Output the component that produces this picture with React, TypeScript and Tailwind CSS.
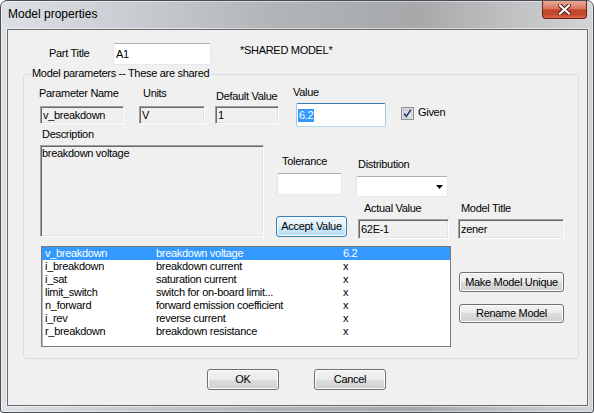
import React from 'react';

const PARAMS: [string, string, string][] = [
  ['v_breakdown', 'breakdown voltage', '6.2'],
  ['i_breakdown', 'breakdown current', 'x'],
  ['i_sat', 'saturation current', 'x'],
  ['limit_switch', 'switch for on-board limit...', 'x'],
  ['n_forward', 'forward emission coefficient', 'x'],
  ['i_rev', 'reverse current', 'x'],
  ['r_breakdown', 'breakdown resistance', 'x'],
];

// classic sunken read-only edit
const sunken =
  'bg-[#f0f0f0] border border-t-[#a0a0a0] border-l-[#a0a0a0] border-r-white border-b-white shadow-[inset_1px_1px_0_#696969,inset_-1px_-1px_0_#e3e3e3]';
// themed editable box
const editBox = 'bg-white border border-[#e3e9ef] border-t-[#abadb3] border-l-[#e2e3ea] rounded-[2px]';
const button =
  'flex items-center justify-center border border-[#707070] rounded-[3px] bg-[linear-gradient(#f2f2f2_0%,#ebebeb_50%,#dddddd_50%,#cfcfcf_100%)] shadow-[inset_0_0_0_1px_#fcfcfc]';

function CheckBox() {
  return (
    <svg width="13" height="13" viewBox="0 0 13 13">
      <defs>
        <linearGradient id="cb" x1="0" y1="0" x2="1" y2="1">
          <stop offset="0" stopColor="#cfd1d3" />
          <stop offset="1" stopColor="#eef0f2" />
        </linearGradient>
      </defs>
      <rect x="0.5" y="0.5" width="12" height="12" fill="#f4f4f4" stroke="#8f8f8f" />
      <rect x="2" y="2" width="9" height="9" fill="url(#cb)" stroke="#b4b8bd" strokeWidth="0.8" />
      <path d="M3.2 6.6 L5.4 9.4 L9.8 2.8" fill="none" stroke="#2a3f7a" strokeWidth="1.7" />
    </svg>
  );
}

export default function App() {
  return (
    <div className="w-[594px] h-[413px] font-['Liberation_Sans',Arial,sans-serif] text-black">
      <div className="w-[594px] h-[413px] flex flex-col rounded-t-[7px] rounded-b-[3px] border border-[#4a4d52] shadow-[inset_0_0_0_1px_rgba(255,255,255,0.45)] bg-[linear-gradient(90deg,#dde0e4_0%,#c9ccd0_22%,#b3b6b9_45%,#a6a8aa_70%,#c1c3c5_88%,#d2d4d6_100%)]">
        {/* title bar */}
        <div className="h-[28px] flex items-start">
          <span className="ml-[7px] mt-[6px] text-[12px] leading-[15px]">Model properties</span>
          <div className="ml-auto mr-[6px] w-[45px] h-[18px] flex items-center justify-center rounded-b-[4px] border border-t-0 border-[#6b2218] bg-[linear-gradient(#e8a897_0%,#d9775f_45%,#c3432b_52%,#c44a2e_80%,#de6a45_100%)]">
            <svg width="13" height="11" viewBox="0 0 13 11">
              <path d="M2 1.5 L11 9.5 M11 1.5 L2 9.5" stroke="#4a140c" strokeWidth="4" strokeLinecap="square" />
              <path d="M2 1.5 L11 9.5 M11 1.5 L2 9.5" stroke="#ffffff" strokeWidth="2.2" strokeLinecap="square" />
            </svg>
          </div>
        </div>

        {/* client area */}
        <div className="ml-[6px] w-[581px] h-[377px] flex flex-col border border-[#6b6b6b] bg-[#f0f0f0] shadow-[0_0_0_1px_rgba(255,255,255,0.5)] text-[11px] leading-[13px] tracking-[-0.3px] whitespace-nowrap">
          {/* part title */}
          <div className="mt-[13px] h-[22px] flex items-start">
            <span className="ml-[41px] w-[64px] mt-[4px]">Part Title</span>
            <div className={`${editBox} w-[98px] h-[22px] flex items-center pl-[2px]`}>A1</div>
            <span className="ml-[29px] mt-[1px]">*SHARED MODEL*</span>
          </div>

          {/* model parameters group */}
          <div className="mt-[9px] ml-[15px] w-[556px] h-[285px] flex flex-col border border-[#d5dfe5] rounded-[3px]">
            <div className="-mt-[8px] -mb-[5px] ml-[7px] self-start px-[1px] bg-[#f0f0f0]">
              Model parameters -- These are shared
            </div>

            <div className="flex items-start">
              <div className="ml-[16px] w-[84px] flex flex-col">
                <span className="mt-[12px] -ml-[1px]">Parameter Name</span>
                <div className={`${sunken} mt-[6px] h-[18px] flex items-center pl-[2px]`}>v_breakdown</div>
              </div>
              <div className="ml-[15px] w-[66px] flex flex-col">
                <span className="mt-[12px] pl-[4px]">Units</span>
                <div className={`${sunken} mt-[6px] h-[18px] flex items-center pl-[2px]`}>V</div>
              </div>
              <div className="ml-[10px] w-[64px] flex flex-col">
                <span className="mt-[15px] pl-[1px]">Default Value</span>
                <div className={`${sunken} mt-[3px] h-[18px] flex items-center pl-[2px]`}>1</div>
              </div>
              <div className="ml-[17px] w-[90px] flex flex-col">
                <span className="mt-[11px] -ml-[3px]">Value</span>
                <div className="mt-[4px] h-[24px] flex items-center pl-[1px] bg-white border border-[#a4c9e3] border-t-[#3d7bad] border-b-[#b7d9ed] rounded-[2px]">
                  <span className="bg-[#3399ff] text-white px-[1px]">6.2</span>
                </div>
              </div>
              <div className="ml-[15px] mt-[32px] w-[13px] h-[13px] flex">
                <CheckBox />
              </div>
              <span className="ml-[4px] mt-[31px]">Given</span>
            </div>

            <div className="flex items-start">
              <div className="ml-[16px] w-[224px] flex flex-col">
                <span className="mt-[1px] pl-[2px]">Description</span>
                <div className={`${sunken} mt-[4px] h-[92px] pl-[1px] pt-[1px]`}>breakdown voltage</div>
              </div>
              <div className="ml-[12px] flex flex-col">
                <div className="flex items-start">
                  <div className="ml-[1px] w-[65px] flex flex-col">
                    <span className="mt-[28px] pl-[5px]">Tolerance</span>
                    <div className={`${editBox} mt-[5px] h-[22px]`} />
                  </div>
                  <div className="ml-[14px] w-[92px] flex flex-col">
                    <span className="mt-[31px] pl-[2px]">Distribution</span>
                    <div className={`${editBox} mt-[5px] h-[21px] flex items-center justify-end`}>
                      <svg width="7" height="4" viewBox="0 0 7 4" className="mr-[4px]">
                        <path d="M0 0 H7 L3.5 4 Z" fill="#000" />
                      </svg>
                    </div>
                  </div>
                </div>
                <div className="flex items-start">
                  <div className="mt-[19px] w-[71px] h-[21px] flex items-center justify-center border border-[#3c7fb1] rounded-[3px] bg-[linear-gradient(#eef7fd_0%,#e0f1fb_50%,#cbe7f8_50%,#bcdff4_100%)] shadow-[inset_0_0_0_1px_#f6fbfe]">
                    Accept Value
                  </div>
                  <div className="ml-[11px] w-[91px] flex flex-col">
                    <span className="mt-[5px] pl-[6px]">Actual Value</span>
                    <div className={`${sunken} mt-[4px] h-[20px] flex items-center pl-[2px]`}>62E-1</div>
                  </div>
                  <div className="ml-[9px] w-[106px] flex flex-col">
                    <span className="mt-[5px] pl-[3px]">Model Title</span>
                    <div className={`${sunken} mt-[4px] h-[20px] flex items-center pl-[2px]`}>zener</div>
                  </div>
                </div>
              </div>
            </div>

            <div className="mt-[7px] flex items-start">
              <div className="ml-[17px] w-[410px] h-[101px] flex flex-col bg-white border border-[#7a7a7a] shadow-[inset_1px_1px_0_#b8b8b8]">
                {PARAMS.map(([name, desc, val], i) => (
                  <div
                    key={name}
                    className={`h-[13px] flex pl-[3px] ${i === 0 ? 'bg-[#3399ff] text-white' : ''}`}
                  >
                    <span className="w-[111px]">{name}</span>
                    <span className="w-[187px]">{desc}</span>
                    <span>{val}</span>
                  </div>
                ))}
              </div>
              <div className="ml-[8px] flex flex-col">
                <div className={`${button} mt-[26px] w-[105px] h-[20px]`}>Make Model Unique</div>
                <div className={`${button} mt-[12px] w-[105px] h-[19px]`}>Rename Model</div>
              </div>
            </div>
          </div>

          {/* dialog buttons */}
          <div className="mt-[10px] flex">
            <div className={`${button} ml-[199px] w-[72px] h-[21px]`}>OK</div>
            <div className={`${button} ml-[35px] w-[72px] h-[21px]`}>Cancel</div>
          </div>
        </div>
      </div>
    </div>
  );
}
